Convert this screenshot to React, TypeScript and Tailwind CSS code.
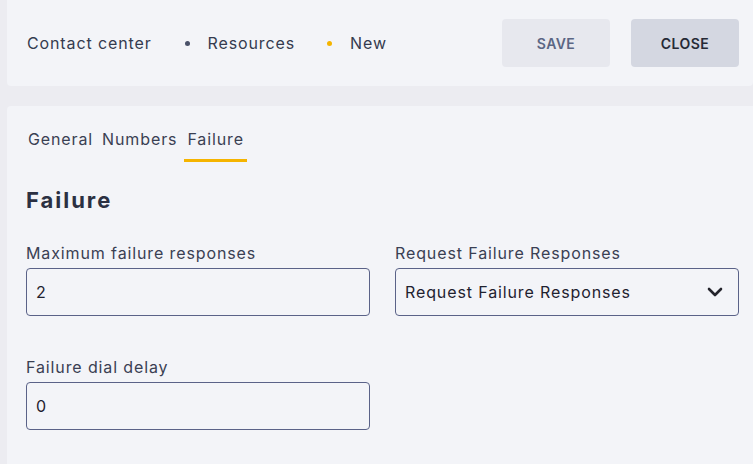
import React from "react";

const font = { fontFamily: "Inter, 'Noto Sans', sans-serif" };

function Chevron() {
  return (
    <svg width="16" height="10" viewBox="0 0 16 10" className="ml-auto text-[#24242c]">
      <path d="M2 2 L8 8 L14 2" fill="none" stroke="currentColor" strokeWidth="2.6" strokeLinecap="round" strokeLinejoin="round" />
    </svg>
  );
}

export default function App() {
  return (
    <div className="w-[753px] h-[464px] overflow-hidden bg-[#ececf1] pl-[7px] flex flex-col gap-[20px] tracking-[0.055em]" style={font}>
      <header className="h-[86px] shrink-0 bg-[#f3f4f8] rounded-b-[4px] flex items-center pl-[20px] pr-[14px] text-[#353b4f]">
        <nav className="flex items-center text-[16px] leading-[24px]">
          <span>Contact center</span>
          <span className="w-[5px] h-[5px] rounded-full bg-[#4a5168] ml-[33px] mr-[18px]"></span>
          <span>Resources</span>
          <span className="w-[5px] h-[5px] rounded-full bg-[#f5b400] ml-[32px] mr-[18px]"></span>
          <span>New</span>
        </nav>
        <div className="ml-auto flex gap-[21px]">
          <button className="w-[108px] h-[48px] rounded-[4px] bg-[#e7e8ee] text-[#5b6684] text-[14px] font-semibold tracking-[0.03em]">SAVE</button>
          <button className="w-[108px] h-[48px] rounded-[4px] bg-[#d4d7e1] text-[#262a36] text-[14px] font-semibold tracking-[0.03em]">CLOSE</button>
        </div>
      </header>

      <main className="flex-1 bg-[#f3f4f8] rounded-tl-[4px] pl-[19px] pr-[14px] pt-[21px] text-[#3a4053]">
        <div className="flex gap-[5px] text-[16px] leading-[24px]">
          <span className="px-[2px] pb-[11px]">General</span>
          <span className="px-[2px] pb-[11px]">Numbers</span>
          <span className="px-[3px] pb-[8px] border-b-[3px] border-[#f5b400]">Failure</span>
        </div>

        <h2 className="mt-[24px] text-[22px] leading-[28px] font-bold text-[#2b3042] tracking-[0.09em]">Failure</h2>

        <div className="mt-[29px] grid grid-cols-2 gap-x-[25px] text-[16px] leading-[20px]">
          <label className="flex flex-col gap-[5px]">
            <span>Maximum failure responses</span>
            <div className="h-[48px] border border-[#5a6288] rounded-[4px] flex items-center px-[9px] text-[#1f2230]">2</div>
          </label>
          <label className="flex flex-col gap-[5px]">
            <span>Request Failure Responses</span>
            <div className="h-[48px] border border-[#5a6288] rounded-[4px] flex items-center pl-[9px] pr-[15px] text-[#1f2230]">
              <span>Request Failure Responses</span>
              <Chevron />
            </div>
          </label>
          <label className="mt-[41px] flex flex-col gap-[5px]">
            <span>Failure dial delay</span>
            <div className="h-[48px] border border-[#5a6288] rounded-[4px] flex items-center px-[9px] text-[#1f2230]">0</div>
          </label>
        </div>
      </main>
    </div>
  );
}
